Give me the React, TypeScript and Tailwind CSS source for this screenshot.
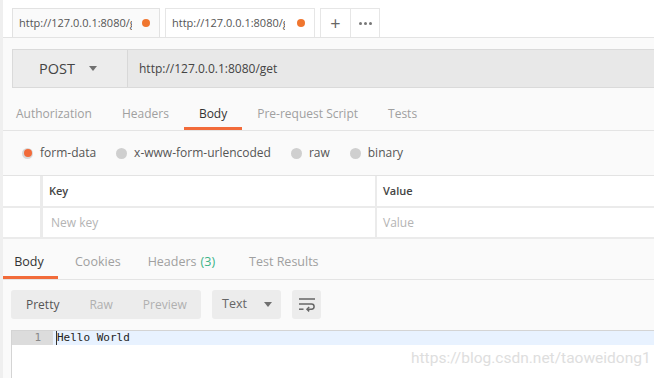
const reqTabs = [
  { name: "Authorization", active: false, ml: "ml-[16px]" },
  { name: "Headers", active: false, ml: "ml-[30px]" },
  { name: "Body", active: true, ml: "ml-[15px]" },
  { name: "Pre-request Script", active: false, ml: "ml-[15px]" },
  { name: "Tests", active: false, ml: "ml-[30px]" },
];

const radios = [
  { name: "form-data", active: true },
  { name: "x-www-form-urlencoded", active: false },
  { name: "raw", active: false },
  { name: "binary", active: false },
];

function Caret() {
  return (
    <svg width="8" height="5" viewBox="0 0 8 5">
      <path d="M0 0h8L4 5z" fill="#707070" />
    </svg>
  );
}

function WrapIcon() {
  return (
    <svg width="18" height="15" viewBox="0 0 18 15" fill="none" stroke="#666" strokeWidth="1.5">
      <path d="M1 2h16" />
      <path d="M1 7h12.5a2.6 2.6 0 0 1 0 5.2H9" />
      <path d="M11.2 10 9 12.2l2.2 2.2" />
      <path d="M1 12.2h4.5" />
    </svg>
  );
}

function App() {
  return (
    <div className="relative h-[378px] w-[654px] overflow-hidden border-l-[3px] border-[#efefef] bg-[#fafafa] font-['Open_Sans',sans-serif] text-[#505050]">
      {/* open request tabs */}
      <div className="flex h-[38px] items-end gap-[5px] border-b border-[#e3e3e3] bg-white pl-[9px]">
        <div className="flex h-[29px] w-[148px] items-center justify-between border border-b-0 border-[#e2e2e2] bg-[#fafafa] pl-[6px] pr-[9px] text-[11px] text-[#555]">
          <span className="w-[113px] overflow-hidden whitespace-nowrap">http://127.0.0.1:8080/get</span>
          <span className="h-[8px] w-[8px] rounded-full bg-[#f0762f]" />
        </div>
        <div className="flex h-[29px] w-[150px] items-center justify-between border border-b-0 border-[#e6e6e6] bg-white pl-[6px] pr-[9px] text-[11px] text-[#555]">
          <span className="w-[113px] overflow-hidden whitespace-nowrap">http://127.0.0.1:8080/get</span>
          <span className="h-[8px] w-[8px] rounded-full bg-[#f0762f]" />
        </div>
        <div className="flex h-[29px] border border-b-0 border-[#e6e6e6] bg-white">
          <div className="flex w-[29px] items-center justify-center text-[18px] leading-none text-[#666]">+</div>
          <div className="flex w-[29px] items-center justify-center border-l border-[#e6e6e6]">
            <span className="flex gap-[2px]">
              <span className="h-[3px] w-[3px] rounded-full bg-[#777]" />
              <span className="h-[3px] w-[3px] rounded-full bg-[#777]" />
              <span className="h-[3px] w-[3px] rounded-full bg-[#777]" />
            </span>
          </div>
        </div>
      </div>

      {/* method + url */}
      <div className="mt-[11px] ml-[9px] flex h-[39px] border-y border-l border-[#dadada]">
        <div className="flex w-[115px] items-center border-r border-[#d8d8d8] bg-[#ececec] pl-[26px] text-[14.5px] text-[#444]">
          POST
          <span className="ml-[14px] flex"><Caret /></span>
        </div>
        <div className="flex flex-1 items-center bg-[#e8e8e8] pl-[11px] text-[12px] text-[#444]">
          http://127.0.0.1:8080/get
        </div>
      </div>

      {/* request tabs */}
      <div className="ml-[-3px] flex h-[43px] items-end border-b border-[#e4e4e4]">
        {reqTabs.map((t) => (
          <div
            key={t.name}
            className={
              t.active
                ? `flex h-[36px] items-start border-b-[3px] border-[#f26b3a] px-[15px] pt-[11px] text-[12px] text-[#333] ${t.ml}`
                : `flex h-[36px] items-start pt-[11px] text-[12px] text-[#a0a0a0] ${t.ml}`
            }
          >
            {t.name}
          </div>
        ))}
      </div>

      {/* body types */}
      <div className="flex h-[44px] items-center gap-[20px] pl-[19px] text-[12px] text-[#555]">
        {radios.map((r) => (
          <div key={r.name} className="flex items-center gap-[7px]">
            {r.active ? (
              <span className="flex h-[11px] w-[11px] items-center justify-center rounded-full bg-[#d9d9d9]">
                <span className="h-[8px] w-[8px] rounded-full bg-[#f26b3a]" />
              </span>
            ) : (
              <span className="h-[11px] w-[11px] rounded-full bg-[#cfcfcf]" />
            )}
            <span>{r.name}</span>
          </div>
        ))}
      </div>

      {/* key/value table */}
      <div className="ml-[-3px] border-t border-[#e3e3e3] bg-white text-[11px]">
        <div className="flex h-[32px] border-b-[2px] border-[#ebebeb]">
          <div className="w-[43px] border-r-[3px] border-[#ebebeb]" />
          <div className="flex w-[334px] items-center border-r-[2px] border-[#ebebeb] pl-[6px] font-semibold text-[#444]">Key</div>
          <div className="flex flex-1 items-center pl-[6px] font-semibold text-[#444]">Value</div>
        </div>
        <div className="flex h-[31px] border-b-[2px] border-[#ebebeb]">
          <div className="w-[43px] border-r-[3px] border-[#ebebeb]" />
          <div className="flex w-[334px] items-center border-r-[2px] border-[#ebebeb] pl-[8px] text-[12px] text-[#b4b4b4]">New key</div>
          <div className="flex flex-1 items-center pl-[6px] text-[12px] text-[#b4b4b4]">Value</div>
        </div>
      </div>

      {/* response tabs */}
      <div className="ml-[-3px] flex h-[41px] items-end border-b border-[#e4e4e4]">
        <div className="flex h-full w-[58px] items-start justify-center border-b-[3px] border-[#f26b3a] pt-[14px] text-[12.5px] text-[#333]">Body</div>
        <div className="flex h-full items-start pl-[17px] pt-[14px] text-[12.5px] text-[#a0a0a0]">Cookies</div>
        <div className="flex h-full items-start pl-[27px] pt-[14px] text-[12.5px] text-[#a0a0a0]">
          Headers <span className="ml-[4px] text-[#3bb387]">(3)</span>
        </div>
        <div className="flex h-full items-start pl-[34px] pt-[14px] text-[12.5px] text-[#a0a0a0]">Test Results</div>
      </div>

      {/* response toolbar */}
      <div className="mt-[10px] ml-[8px] flex h-[29px] gap-[11px]">
        <div className="flex w-[190px] items-center rounded-[3px] bg-[#ececec] text-[12px]">
          <span className="pl-[15px] text-[#555]">Pretty</span>
          <span className="pl-[30px] text-[#b0b0b0]">Raw</span>
          <span className="pl-[30px] text-[#b0b0b0]">Preview</span>
        </div>
        <div className="flex w-[69px] items-center rounded-[3px] bg-[#ececec] pl-[10px] text-[12.5px] text-[#666]">
          Text
          <span className="ml-[17px] flex"><Caret /></span>
        </div>
        <div className="flex w-[29px] items-center justify-center rounded-[3px] bg-[#ececec]">
          <WrapIcon />
        </div>
      </div>

      {/* editor */}
      <div className="mt-[11px] ml-[8px] h-[60px] border-t border-l border-[#d4d4d4] bg-white">
        <div className="flex h-[14px] bg-[#e8f2ff] font-['DejaVu_Sans_Mono',monospace] text-[11px] leading-[14px]">
          <div className="w-[41px] bg-[#dcdcdc] pr-[12px] text-right text-[#888]">1</div>
          <div className="ml-[3px] border-l border-[#333] text-[#222]">Hello World</div>
        </div>
      </div>

      <div className="absolute top-[347px] left-[408px] font-['Roboto',sans-serif] text-[15.5px] text-[#dedede]">
        https://blog.csdn.net/taoweidong1
      </div>
    </div>
  );
}

export default App;
